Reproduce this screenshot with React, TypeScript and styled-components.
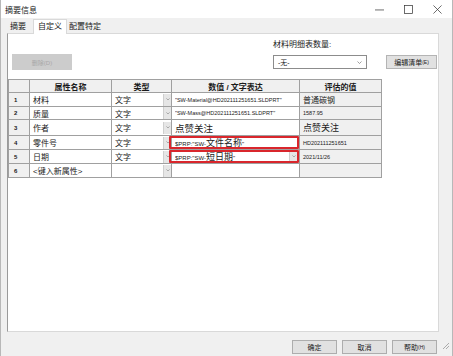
import React from "react";
import styled, { createGlobalStyle } from "styled-components";

const Global = createGlobalStyle`
  html, body { margin: 0; padding: 0; background: #f0f0f0; }
  body { font-family: "Liberation Sans", "Noto Sans CJK SC", sans-serif; color: #1a1a1a; }
`;

const Window = styled.div`
  position: relative;
  width: 453px;
  height: 356px;
  box-sizing: border-box;
  background: #f0f0f0;
  border-left: 1px solid #b8b8b8;
  border-right: 1px solid #b8b8b8;
  display: flex;
  flex-direction: column;
  overflow: hidden;
`;

const TitleBar = styled.div`
  height: 18px;
  background: #ffffff;
  display: flex;
  align-items: center;
  padding-left: 4px;
  font-size: 8px;
`;

const TitleText = styled.div`
  flex: 1;
`;

const WinBtn = styled.div`
  width: 29px;
  height: 18px;
  display: flex;
  align-items: center;
  justify-content: center;
  color: #333;
`;

const Body = styled.div`
  flex: 1;
  display: flex;
  flex-direction: column;
  padding: 0 13px 0 6px;
`;

const Tabs = styled.div`
  display: flex;
  align-items: flex-end;
  height: 15px;
  padding-left: 1px;
  font-size: 8px;
`;

const Tab = styled.div<{ $active?: boolean }>`
  height: ${(p) => (p.$active ? "15px" : "13px")};
  line-height: ${(p) => (p.$active ? "14px" : "13px")};
  padding: 0 ${(p) => (p.$active ? "4px" : "2px")};
  margin-right: ${(p) => (p.$active ? "0" : "5px")};
  background: ${(p) => (p.$active ? "#ffffff" : "transparent")};
  border: ${(p) => (p.$active ? "1px solid #d9d9d9" : "none")};
  border-bottom: none;
  box-sizing: border-box;
  margin-bottom: ${(p) => (p.$active ? "-1px" : "0")};
  position: relative;
  z-index: 1;
`;

const Panel = styled.div`
  height: 299px;
  box-sizing: border-box;
  background: #ffffff;
  border: 1px solid #d9d9d9;
  border-left: 1px solid #9a9a9a;
  display: flex;
  flex-direction: column;
`;

const TopControls = styled.div`
  display: flex;
  height: 45px;
  padding: 6px 0 0 4px;
  box-sizing: border-box;
`;

const LeftCtl = styled.div`
  flex: 1;
  padding-top: 14px;
`;

const DisabledBtn = styled.div`
  width: 60px;
  height: 16px;
  background: #cccccc;
  color: #a8a8a8;
  font-size: 6px;
  display: flex;
  align-items: center;
  justify-content: center;
`;

const RightCtl = styled.div`
  width: 165px;
  display: flex;
  flex-direction: column;
  gap: 5px;
`;

const Label = styled.div`
  font-size: 8px;
  line-height: 10px;
`;

const CtlRow = styled.div`
  display: flex;
  gap: 19px;
`;

const Combo = styled.div`
  width: 94px;
  height: 14px;
  box-sizing: border-box;
  border: 1px solid #8c8c8c;
  background: #fff;
  font-size: 7px;
  display: flex;
  align-items: center;
  padding: 0 4px;
  justify-content: space-between;
`;

const GrayBtn = styled.div`
  width: 51px;
  height: 14px;
  box-sizing: border-box;
  border: 1px solid #b4b4b4;
  background: #e1e1e1;
  font-size: 7px;
  display: flex;
  align-items: center;
  justify-content: center;
  white-space: nowrap;
`;

const Small = styled.span`
  font-size: 5px;
`;

const Big = styled.span`
  font-size: 9px;
`;

const Grid = styled.div`
  display: grid;
  grid-template-columns: 21px 82px 60px 128px 82px;
  grid-template-rows: 13px 14px 13px 16px 14px 14px 14px;
  width: 373px;
  border-top: 1px solid #a0a0a0;
  border-left: 1px solid #a0a0a0;
  box-sizing: content-box;
`;

const Cell = styled.div<{ $bg?: string; $size?: number; $bold?: boolean; $center?: boolean; $hl?: boolean }>`
  position: relative;
  border-right: 1px solid #a0a0a0;
  border-bottom: 1px solid #a0a0a0;
  background: ${(p) => p.$bg || "#ffffff"};
  font-size: ${(p) => p.$size || 8}px;
  font-weight: ${(p) => (p.$bold ? 700 : 400)};
  display: flex;
  align-items: center;
  justify-content: ${(p) => (p.$center ? "center" : "flex-start")};
  padding-left: ${(p) => (p.$center ? 0 : 3)}px;
  white-space: nowrap;
  min-width: 0;
  ${(p) =>
    p.$hl
      ? `&::after { content: ""; position: absolute; left: -3px; top: 0; right: 0; bottom: 0; border: 2px solid #d9262c; border-radius: 1px; pointer-events: none; }`
      : ""}
`;

const NumCell = styled(Cell)`
  background: #f0f0f0;
  font-size: 6px;
  font-weight: 700;
  padding-left: 5px;
`;

const CellText = styled.span`
  flex: 1;
  overflow: hidden;
`;

const Arrow = styled.div<{ $inset?: boolean }>`
  width: 7px;
  height: 12px;
  background: #e6e6e6;
  border-left: 1px solid #cfcfcf;
  display: flex;
  align-items: center;
  justify-content: center;
  flex-shrink: 0;
  margin-right: ${(p) => (p.$inset ? "2px" : "0")};
`;

const Footer = styled.div`
  display: flex;
  justify-content: flex-end;
  gap: 5px;
  padding-top: 8px;
  padding-right: 2px;
`;

const FooterBtn = styled.div`
  width: 45px;
  height: 14px;
  box-sizing: border-box;
  border: 1px solid #adadad;
  background: #e1e1e1;
  font-size: 7px;
  display: flex;
  align-items: center;
  justify-content: center;
`;

const Grip = styled.div`
  position: absolute;
  right: 2px;
  bottom: 2px;
`;

const Chevron = ({ size = 5 }: { size?: number }) => (
  <svg width={size} height={size * 0.6} viewBox="0 0 10 6">
    <path d="M1 1 L5 5 L9 1" fill="none" stroke="#777" strokeWidth="1.4" />
  </svg>
);

type Row = {
  n: string;
  name: string;
  type: string;
  value: React.ReactNode;
  vSize: number;
  evald: string;
  eSize: number;
  hl?: boolean;
  valArrow?: boolean;
};

const rows: Row[] = [
  { n: "1", name: "材料", type: "文字", value: "\"SW-Material@HD202111251651.SLDPRT\"", vSize: 5.5, evald: "普通碳钢", eSize: 8 },
  { n: "2", name: "质量", type: "文字", value: "\"SW-Mass@HD202111251651.SLDPRT\"", vSize: 5.5, evald: "1587.95", eSize: 5.5 },
  { n: "3", name: "作者", type: "文字", value: "点赞关注", vSize: 9.5, evald: "点赞关注", eSize: 9 },
  { n: "4", name: "零件号", type: "文字", value: <>$PRP:"SW-<Big>文件名称</Big>"</>, vSize: 6, evald: "HD202111251651", eSize: 5.5, hl: true },
  { n: "5", name: "日期", type: "文字", value: <>$PRP:"SW-<Big>短日期</Big>"</>, vSize: 6, evald: "2021/11/26", eSize: 5.5, hl: true, valArrow: true },
  { n: "6", name: "<键入新属性>", type: "", value: "", vSize: 8, evald: "", eSize: 8 },
];

export default function App() {
  return (
    <>
      <Global />
      <Window>
        <TitleBar>
          <TitleText>摘要信息</TitleText>
          <WinBtn>
            <svg width="9" height="9" viewBox="0 0 10 10"><path d="M0 5.5 H10" stroke="#333" strokeWidth="0.8" /></svg>
          </WinBtn>
          <WinBtn>
            <svg width="9" height="9" viewBox="0 0 10 10"><rect x="0.5" y="0.5" width="9" height="9" fill="none" stroke="#333" strokeWidth="0.8" /></svg>
          </WinBtn>
          <WinBtn>
            <svg width="9" height="9" viewBox="0 0 10 10"><path d="M0.5 0.5 L9.5 9.5 M9.5 0.5 L0.5 9.5" stroke="#333" strokeWidth="0.8" /></svg>
          </WinBtn>
        </TitleBar>
        <Body>
          <Tabs>
            <Tab>摘要</Tab>
            <Tab $active>自定义</Tab>
            <Tab>配置特定</Tab>
          </Tabs>
          <Panel>
            <TopControls>
              <LeftCtl>
                <DisabledBtn>删除(D)</DisabledBtn>
              </LeftCtl>
              <RightCtl>
                <Label>材料明细表数量:</Label>
                <CtlRow>
                  <Combo>
                    <span>-无-</span>
                    <Chevron size={5} />
                  </Combo>
                  <GrayBtn>编辑清单<Small>(E)</Small></GrayBtn>
                </CtlRow>
              </RightCtl>
            </TopControls>
            <Grid>
              <Cell $bg="#f0f0f0" />
              <Cell $bg="#f0f0f0" $bold $center>属性名称</Cell>
              <Cell $bg="#f0f0f0" $bold $center>类型</Cell>
              <Cell $bg="#f0f0f0" $bold $center>数值 / 文字表达</Cell>
              <Cell $bg="#f0f0f0" $bold $center>评估的值</Cell>
              {rows.map((r) => (
                <React.Fragment key={r.n}>
                  <NumCell>{r.n}</NumCell>
                  <Cell>{r.name}</Cell>
                  <Cell style={{ paddingRight: 0 }}>
                    <CellText>{r.type}</CellText>
                    <Arrow><Chevron size={4} /></Arrow>
                  </Cell>
                  <Cell $size={r.vSize} $hl={r.hl}>
                    <CellText>{r.value}</CellText>
                    {r.valArrow && (
                      <Arrow $inset><Chevron size={4} /></Arrow>
                    )}
                  </Cell>
                  <Cell $bg="#f0f0f0" $size={r.eSize}>{r.evald}</Cell>
                </React.Fragment>
              ))}
            </Grid>
          </Panel>
          <Footer>
            <FooterBtn>确定</FooterBtn>
            <FooterBtn>取消</FooterBtn>
            <FooterBtn>帮助<Small>(H)</Small></FooterBtn>
          </Footer>
        </Body>
        <Grip>
          <svg width="8" height="8" viewBox="0 0 8 8">
            <path d="M7 1 L1 7 M7 4 L4 7" stroke="#999" strokeWidth="0.8" />
          </svg>
        </Grip>
      </Window>
    </>
  );
}
